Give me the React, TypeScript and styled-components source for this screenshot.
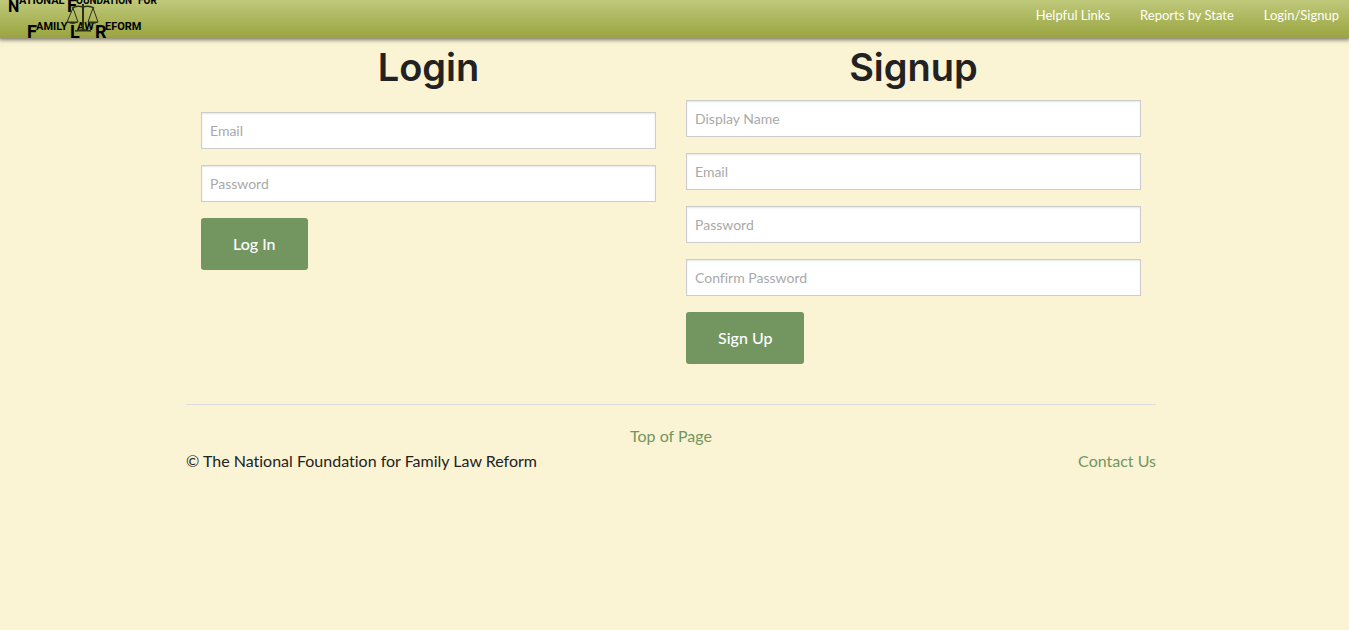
import React from "react";
import styled, { createGlobalStyle } from "styled-components";

const GlobalStyle = createGlobalStyle`
  *, *::before, *::after { box-sizing: border-box; }
  body {
    margin: 0;
    background: #faf4d5;
    color: #222;
    font-family: Lato, "Liberation Sans", sans-serif;
    font-size: 16px;
    line-height: 24px;
    font-variant-ligatures: no-common-ligatures;
  }
`;

const TopBar = styled.header`
  display: flex;
  justify-content: space-between;
  height: 38px;
  background: linear-gradient(#bfc97a, #99a440);
  box-shadow: 0 1px 4px 1px rgba(0, 0, 0, 0.5);
`;

const LogoLink = styled.a`
  display: block;
  height: 39px;
`;

const LogoDrawing = styled.svg`
  display: block;
  font-family: Roboto, "Liberation Sans", sans-serif;
  font-weight: 700;
`;

const NavList = styled.nav`
  display: flex;
  gap: 30px;
  padding: 3px 10px 0 0;
`;

const NavLink = styled.a`
  color: #fff;
  font-size: 13px;
  text-decoration: none;
`;

const Page = styled.div`
  max-width: 977px;
  margin: 0 auto;
  padding-right: 7px;
`;

const Columns = styled.main`
  display: grid;
  grid-template-columns: 1fr 1fr;
  gap: 30px;
  padding: 8px 15px 0;
`;

const Title = styled.h1<{ $gap: number }>`
  margin: 0 0 ${(p) => p.$gap}px;
  font-family: Inter, "Liberation Sans", sans-serif;
  font-size: 38px;
  font-weight: 600;
  line-height: 42px;
  text-align: center;
`;

const Field = styled.input`
  display: block;
  width: 100%;
  height: 37px;
  margin: 0 0 16px;
  padding: 8px;
  border: 1px solid #ccc;
  border-radius: 0;
  background: #fff;
  box-shadow: inset 0 1px 2px rgba(0, 0, 0, 0.1);
  color: #222;
  font-family: inherit;
  font-size: 14px;
  font-variant-ligatures: inherit;

  &::placeholder { color: #a9a9a9; opacity: 1; }
`;

const SubmitButton = styled.button`
  display: block;
  height: 52px;
  padding: 0 32px 2px;
  border: 0;
  border-radius: 3px;
  background: #73955f;
  color: #fff;
  font-family: inherit;
  font-size: 16px;
  font-weight: 500;
`;

const Footer = styled.footer`
  margin-top: 40px;
  padding-top: 18px;
  border-top: 1px solid #ddd;
`;

const FooterRow = styled.div<{ $justify: string }>`
  display: flex;
  justify-content: ${(p) => p.$justify};
  line-height: 25px;
`;

const FooterLink = styled.a`
  color: #73955f;
  text-decoration: none;
`;

const stop = (e: React.FormEvent) => e.preventDefault();

function Logo() {
  return (
    <LogoDrawing width="170" height="39" viewBox="0 0 170 39" role="img" aria-label="National Foundation for Family Law Reform">
      <g fontSize="18">
        <text x="8" y="12" fontSize="16">N</text>
        <text x="67" y="12">F</text>
        <text x="27" y="38">F</text>
        <text x="70" y="38">L</text>
        <text x="95" y="38">R</text>
      </g>
      <g fontSize="11">
        <text x="19" y="4">ATIONAL</text>
        <text x="76" y="4" fontSize="10">OUNDATION</text>
        <text x="138" y="4" fontSize="10">FOR</text>
        <text x="36" y="30">AMILY</text>
        <text x="77" y="30">AW</text>
        <text x="105" y="30">EFORM</text>
      </g>
      <g fill="none" stroke="#2c3014" strokeWidth="1">
        <path d="M72 8 Q77 5 83 7 Q89 5 94 8" strokeWidth="1.4" />
        <path d="M83 4V30" strokeWidth="2" />
        <path d="M73 8L67 22M73 8L78 22M93 8L88 22M93 8L98 22" />
        <path d="M67 22H78Q73 25 67 22ZM88 22H98Q93 25 88 22Z" fill="#2c3014" />
        <path d="M75 31Q83 28 91 31Z" fill="#2c3014" />
      </g>
    </LogoDrawing>
  );
}

export default function App() {
  return (
    <>
      <GlobalStyle />
      <TopBar id="top">
        <LogoLink href="#home"><Logo /></LogoLink>
        <NavList>
          <NavLink href="#links">Helpful Links</NavLink>
          <NavLink href="#reports">Reports by State</NavLink>
          <NavLink href="#login">Login/Signup</NavLink>
        </NavList>
      </TopBar>
      <Page>
        <Columns>
          <form onSubmit={stop}>
            <Title $gap={24}>Login</Title>
            <Field type="email" placeholder="Email" aria-label="Email" />
            <Field type="password" placeholder="Password" aria-label="Password" />
            <SubmitButton type="submit">Log In</SubmitButton>
          </form>
          <form onSubmit={stop}>
            <Title $gap={12}>Signup</Title>
            <Field type="text" placeholder="Display Name" aria-label="Display Name" />
            <Field type="email" placeholder="Email" aria-label="Email" />
            <Field type="password" placeholder="Password" aria-label="Password" />
            <Field type="password" placeholder="Confirm Password" aria-label="Confirm Password" />
            <SubmitButton type="submit">Sign Up</SubmitButton>
          </form>
        </Columns>
        <Footer>
          <FooterRow $justify="center">
            <FooterLink href="#top">Top of Page</FooterLink>
          </FooterRow>
          <FooterRow $justify="space-between">
            <span>© The National Foundation for Family Law Reform</span>
            <FooterLink href="#contact">Contact Us</FooterLink>
          </FooterRow>
        </Footer>
      </Page>
    </>
  );
}
